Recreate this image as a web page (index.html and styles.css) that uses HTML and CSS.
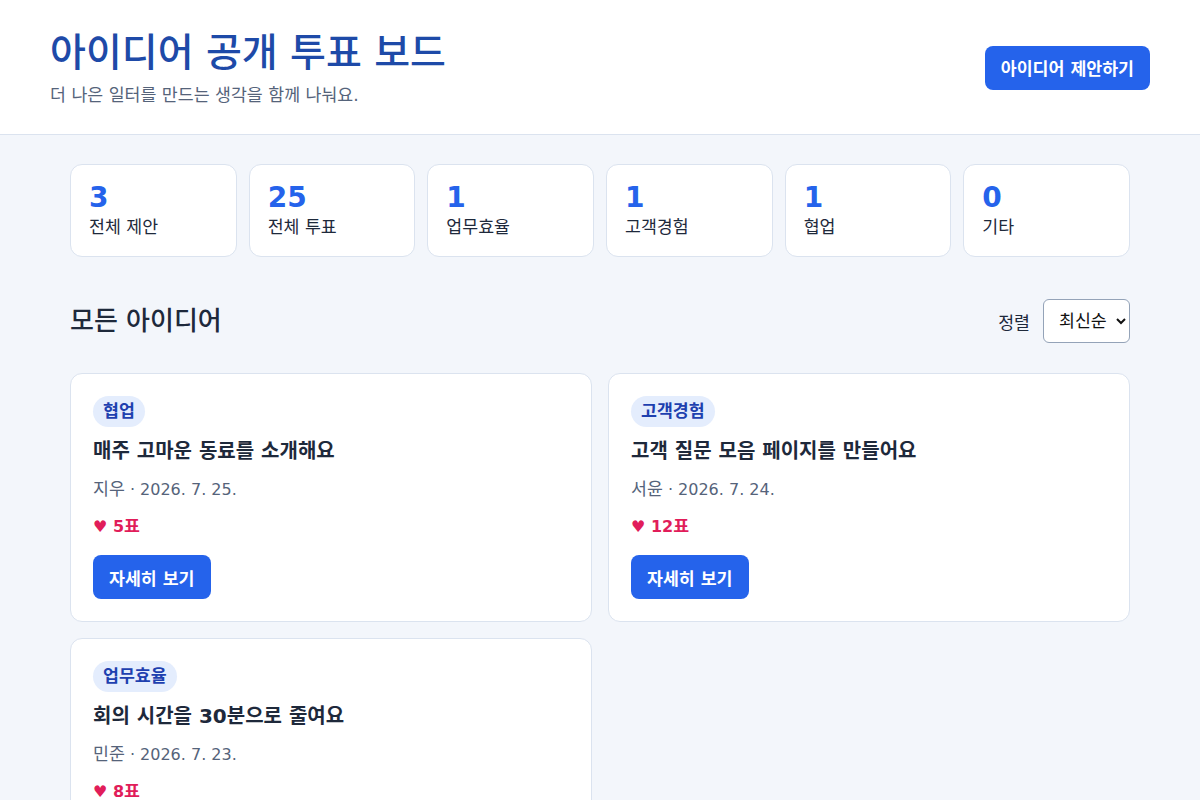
FILE: index.html
```html
<!DOCTYPE html>
<html lang="ko">
<head>
    <meta charset="UTF-8">
    <title>아이디어 공개 투표 보드</title>
    <meta name="viewport" content="width=device-width, initial-scale=1.0">
    <link rel="stylesheet" href="styles.css">
</head>
<body>
    <header class="top">
        <div>
            <h1>아이디어 공개 투표 보드</h1>
            <p class="lead">더 나은 일터를 만드는 생각을 함께 나눠요.</p>
        </div>
        <button class="btn">아이디어 제안하기</button>
    </header>

    <main class="wrap">
        <section class="stats">
            <div class="stat"><strong>3</strong><span>전체 제안</span></div>
            <div class="stat"><strong>25</strong><span>전체 투표</span></div>
            <div class="stat"><strong>1</strong><span>업무효율</span></div>
            <div class="stat"><strong>1</strong><span>고객경험</span></div>
            <div class="stat"><strong>1</strong><span>협업</span></div>
            <div class="stat"><strong>0</strong><span>기타</span></div>
        </section>

        <div class="list-head">
            <h2>모든 아이디어</h2>
            <label class="sort">정렬
                <select>
                    <option>최신순</option>
                    <option>인기순</option>
                </select>
            </label>
        </div>

        <section class="ideas">
            <article class="idea">
                <span class="tag">협업</span>
                <h3>매주 고마운 동료를 소개해요</h3>
                <p class="meta"><span class="who">지우</span> · 2026. 7. 25.</p>
                <p class="votes">♥ 5<span class="who">표</span></p>
                <button class="btn">자세히 보기</button>
            </article>
            <article class="idea">
                <span class="tag">고객경험</span>
                <h3>고객 질문 모음 페이지를 만들어요</h3>
                <p class="meta"><span class="who">서윤</span> · 2026. 7. 24.</p>
                <p class="votes">♥ 12<span class="who">표</span></p>
                <button class="btn">자세히 보기</button>
            </article>
            <article class="idea">
                <span class="tag">업무효율</span>
                <h3>회의 시간을 30분으로 줄여요</h3>
                <p class="meta"><span class="who">민준</span> · 2026. 7. 23.</p>
                <p class="votes">♥ 8<span class="who">표</span></p>
                <button class="btn">자세히 보기</button>
            </article>
        </section>
    </main>
</body>
</html>
```

FILE: styles.css
```css
/* 한글 글꼴이 좁게 나와서 한글 위주 텍스트는 조금 키움 */
body {
    margin: 0;
    font-family: "DejaVu Sans", "Noto Sans CJK KR", sans-serif;
    background: #f3f6fb;
    color: #1e293b;
}

.top {
    display: flex;
    justify-content: space-between;
    align-items: center;
    padding: 28px 50px 27px;
    background: #fff;
    border-bottom: 1px solid #dbe3ef;
}

h1 {
    margin: 0;
    font-size: 39px;
    line-height: 50px;
    font-weight: 500;
    color: #1e4aa8;
}

.lead {
    margin: 5px 0 0;
    font-size: 17.3px;
    line-height: 24px;
    color: #55637a;
}

.btn {
    height: 44px;
    padding: 0 16px;
    font-family: inherit;
    font-size: 17.3px;
    font-weight: bold;
    color: #fff;
    background: #2563eb;
    border: none;
    border-radius: 8px;
    cursor: pointer;
}

.wrap {
    max-width: 1060px;
    margin: 0 auto;
    padding-top: 29px;
}

.stats {
    display: grid;
    grid-template-columns: repeat(6, 1fr);
    gap: 12px;
}

.stat {
    display: flex;
    flex-direction: column;
    padding: 16px 18px 17px;
    background: #fff;
    border: 1px solid #dbe3ef;
    border-radius: 12px;
}

.stat strong {
    font-size: 28px;
    line-height: 34px;
    color: #2563eb;
}

.stat span {
    font-size: 17.3px;
    line-height: 24px;
    color: #1e293b;
}

.list-head {
    display: flex;
    justify-content: space-between;
    align-items: center;
    margin: 42px 0 30px;
}

h2 {
    margin: 0;
    font-size: 26px;
    line-height: 34px;
    font-weight: 500;
    color: #1e293b;
}

.sort {
    display: flex;
    align-items: center;
    gap: 13px;
    font-size: 17.3px;
    color: #1e293b;
}

.sort select {
    height: 44px;
    padding: 0 6px 0 11px;
    font-family: inherit;
    font-size: 17.3px;
    color: #111;
    background: #fff;
    border: 1px solid #94a3b8;
    border-radius: 6px;
}

.ideas {
    display: grid;
    grid-template-columns: 1fr 1fr;
    gap: 16px;
}

.idea {
    display: flex;
    flex-direction: column;
    align-items: flex-start;
    padding: 22px;
    background: #fff;
    border: 1px solid #dbe3ef;
    border-radius: 12px;
}

.tag {
    padding: 4px 10px;
    font-size: 17.3px;
    line-height: 23px;
    font-weight: bold;
    color: #1e40af;
    background: #e4edfd;
    border-radius: 999px;
}

.idea h3 {
    margin: 11px 0 0;
    font-size: 20px;
    line-height: 27px;
    font-weight: 600;
}

.meta {
    margin: 13px 0 0;
    font-size: 16px;
    line-height: 24px;
    color: #55637a;
}

.who {
    font-size: 17.3px;
    line-height: 1;
}

.votes {
    margin: 13px 0 16px;
    font-size: 16px;
    line-height: 24px;
    font-weight: bold;
    color: #e11d5a;
}
```
